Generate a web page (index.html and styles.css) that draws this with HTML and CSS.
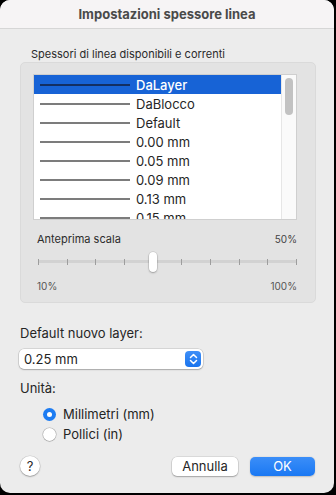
FILE: index.html
```html
<!DOCTYPE html>
<html lang="it">
<head>
<meta charset="utf-8">
<title>Impostazioni spessore linea</title>
<link rel="stylesheet" href="styles.css">
</head>
<body>
<div class="dialog">
  <div class="titlebar">Impostazioni spessore linea</div>
  <div class="content">
    <div class="group-label">Spessori di linea disponibili e correnti</div>
    <div class="group">
      <div class="list">
        <div class="rows">
          <div class="row selected"><span class="line"></span><span class="name">DaLayer</span></div>
          <div class="row"><span class="line"></span><span class="name">DaBlocco</span></div>
          <div class="row"><span class="line"></span><span class="name">Default</span></div>
          <div class="row"><span class="line"></span><span class="name">0.00 mm</span></div>
          <div class="row"><span class="line"></span><span class="name">0.05 mm</span></div>
          <div class="row"><span class="line"></span><span class="name">0.09 mm</span></div>
          <div class="row"><span class="line"></span><span class="name">0.13 mm</span></div>
          <div class="row"><span class="line"></span><span class="name">0.15 mm</span></div>
        </div>
        <div class="scrollbar"><div class="thumb"></div></div>
      </div>
      <div class="scale-head"><span>Anteprima scala</span><span class="small">50%</span></div>
      <div class="slider">
        <span class="tick"></span><span class="tick"></span><span class="tick"></span><span class="tick"></span><span class="tick"></span>
        <span class="tick"></span><span class="tick"></span><span class="tick"></span><span class="tick"></span><span class="tick"></span>
        <span class="knob"></span>
      </div>
      <div class="scale-foot"><span>10%</span><span>100%</span></div>
    </div>
    <div class="label first">Default nuovo layer:</div>
    <div class="popup">
      <span>0.25 mm</span>
      <span class="stepper">
        <svg width="9" height="12" viewBox="0 0 9 12"><path d="M1.5 4.5 L4.5 1.5 L7.5 4.5 M1.5 7.5 L4.5 10.5 L7.5 7.5" fill="none" stroke="#fff" stroke-width="1.5" stroke-linecap="round" stroke-linejoin="round"/></svg>
      </span>
    </div>
    <div class="label second">Unità:</div>
    <div class="radios">
      <div class="radio-row"><span class="radio on"></span><span>Millimetri (mm)</span></div>
      <div class="radio-row"><span class="radio"></span><span>Pollici (in)</span></div>
    </div>
    <div class="buttons">
      <span class="help">?</span>
      <span class="spacer"></span>
      <span class="btn">Annulla</span>
      <span class="btn primary">OK</span>
    </div>
  </div>
</div>
</body>
</html>
```
FILE: styles.css
```css
* { box-sizing: border-box; }
html, body { margin: 0; padding: 0; }
body {
  background: #000;
  width: 336px;
  height: 495px;
  overflow: hidden;
  font-family: Inter, "Noto Sans", sans-serif;
  color: #242424;
}
.dialog {
  width: 334px;
  height: 493px;
  background: #ececec;
  border-radius: 10px;
  overflow: hidden;
}
.titlebar {
  height: 29px;
  line-height: 28px;
  background: #f6f4f5;
  border-bottom: 1px solid #d6d6d6;
  text-align: center;
  font-weight: 700;
  font-size: 13px;
  color: #4a4a4a;
}
.content {
  padding: 0 18px 0 20px;
}
.group-label {
  margin-top: 18px;
  margin-left: 11px;
  font-size: 11px;
  line-height: 14px;
  height: 14px;
  color: #2a2a2a;
}
.group {
  margin-top: 1px;
  background: #e3e3e3;
  border: 1px solid #dadada;
  border-radius: 5px;
  padding: 11px 18px 10px 12px;
  height: 241px;
}
.list {
  display: flex;
  height: 146px;
  background: #fff;
  border: 1px solid #cfcfcf;
  overflow: hidden;
}
.rows {
  flex: 1;
  overflow: hidden;
}
.row {
  height: 19px;
  display: flex;
  align-items: center;
  font-size: 13px;
  color: #262626;
}
.row .line {
  width: 90px;
  height: 2px;
  background: #7c7c7c;
  margin-left: 6px;
  margin-right: 6px;
}
.row.selected {
  background: #1763d6;
  color: #fff;
  font-weight: 500;
}
.row.selected .line {
  background: #132f63;
}
.scrollbar {
  width: 15px;
  background: #fafafa;
  border-left: 1px solid #e6e6e6;
  padding: 3px 0 0 3px;
}
.thumb {
  width: 8px;
  height: 37px;
  background: #c2c2c2;
  border-radius: 4px;
}
.scale-head, .scale-foot {
  display: flex;
  justify-content: space-between;
  padding-left: 4px;
}
.scale-head {
  margin-top: 12px;
  height: 14px;
  line-height: 14px;
  font-size: 11px;
  color: #2c2c2c;
}
.scale-head .small {
  font-size: 10px;
  color: #444;
}
.slider {
  position: relative;
  margin: 6px 0 0 5px;
  height: 20px;
  display: flex;
  justify-content: space-between;
  align-items: center;
  background: linear-gradient(#e3e3e3 0, #e3e3e3 8px, #d2d2d2 8px, #d2d2d2 11px, #e3e3e3 11px);
}
.tick {
  width: 1px;
  height: 6px;
  background: #9d9d9d;
}
.knob {
  position: absolute;
  left: 111px;
  top: 0;
  width: 8px;
  height: 20px;
  background: #fff;
  border-radius: 4px;
  box-shadow: 0 0 0 0.5px rgba(0,0,0,0.15), 0 1px 2px rgba(0,0,0,0.25);
}
.scale-foot {
  margin-top: 8px;
  height: 12px;
  line-height: 12px;
  font-size: 10px;
  color: #555;
}
.label {
  font-size: 13px;
  line-height: 16px;
  height: 16px;
  color: #262626;
}
.label.first { margin-top: 22px; }
.label.second { margin-top: 11px; }
.popup {
  margin-top: 8px;
  width: 184px;
  height: 20px;
  margin-left: -1px;
  background: #fff;
  border-radius: 5px;
  box-shadow: 0 0 0 0.5px rgba(0,0,0,0.18), 0 1px 1.5px rgba(0,0,0,0.22);
  display: flex;
  align-items: center;
  justify-content: space-between;
  padding: 0 2px 0 5px;
  font-size: 13px;
}
.stepper {
  width: 16px;
  height: 16px;
  border-radius: 4px;
  background: linear-gradient(#3f8ff7, #1a74ee);
  display: flex;
  align-items: center;
  justify-content: center;
}
.radios {
  margin-top: 8px;
  padding-left: 23px;
}
.radio-row {
  height: 20px;
  display: flex;
  align-items: center;
  font-size: 13px;
  gap: 7px;
}
.radio {
  width: 13px;
  height: 13px;
  border-radius: 50%;
  background: #fff;
  box-shadow: 0 0 0 0.5px rgba(0,0,0,0.25), 0 0.5px 1px rgba(0,0,0,0.2);
  display: flex;
  align-items: center;
  justify-content: center;
}
.radio.on {
  background: #1d7cf2;
  box-shadow: none;
}
.radio.on::after {
  content: "";
  width: 5px;
  height: 5px;
  border-radius: 50%;
  background: #fff;
}
.buttons {
  margin-top: 12px;
  display: flex;
  align-items: center;
  height: 20px;
}
.help {
  width: 20px;
  height: 20px;
  border-radius: 50%;
  background: #fff;
  box-shadow: 0 0 0 0.5px rgba(0,0,0,0.15), 0 1px 1.5px rgba(0,0,0,0.25);
  display: flex;
  align-items: center;
  justify-content: center;
  font-size: 13px;
  color: #2a2a2a;
}
.spacer { flex: 1; }
.btn {
  width: 66px;
  height: 19px;
  border-radius: 5px;
  background: #fff;
  box-shadow: 0 0 0 0.5px rgba(0,0,0,0.15), 0 1px 1.5px rgba(0,0,0,0.25);
  display: flex;
  align-items: center;
  justify-content: center;
  font-size: 13px;
  color: #262626;
  margin-left: 12px;
}
.btn.primary {
  width: 65px;
  background: linear-gradient(#3b8ef8, #1a78f3);
  color: #fff;
  box-shadow: 0 0.5px 1.5px rgba(0,0,0,0.2);
  margin-right: 1px;
}
```
